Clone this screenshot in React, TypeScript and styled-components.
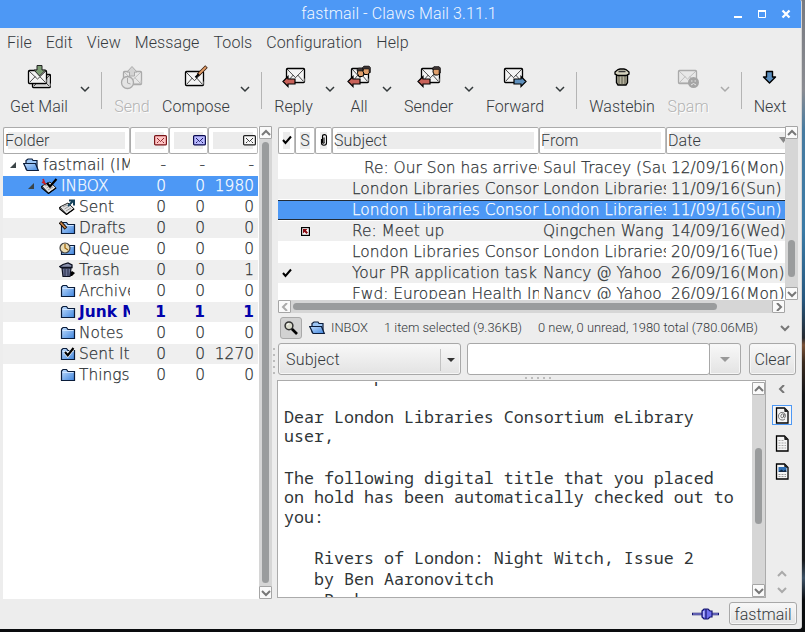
import React from 'react';
import styled, { createGlobalStyle, css } from 'styled-components';

const GlobalStyle = createGlobalStyle`
  * { box-sizing: border-box; }
  body { margin: 0; overflow: hidden; background: #0d0f12; }
`;

const uiFont = 'Roboto, "Liberation Sans", sans-serif';
const listFont = '"DejaVu Sans Light", "DejaVu Sans", sans-serif';
const ink = '#353a3d';
const blue = '#4d98f5';

/* ---------- window frame ---------- */

const Desktop = styled.div`
  width: 805px;
  height: 632px;
  background: linear-gradient(#787a80 0, #8a8c92 90px, #477ba0 130px, #3b7ba6 230px, #27577e 300px, #262a30 338px, #7a5136 345px, #3a2b20 362px, #131518 395px, #17191c 560px, #3d5266 578px, #0a0c0e 600px);
`;
const Window = styled.div`
  width: 802px;
  height: 629px;
  display: flex;
  flex-direction: column;
  background: #ededed;
  border-right: 1px solid #d5d5d5;
  border-radius: 0 2px 3px 0;
  overflow: hidden;
  font: 300 16px ${uiFont};
  color: ${ink};
`;
const TitleBar = styled.header`
  height: 28px;
  flex: none;
  display: grid;
  grid-template-columns: 1fr 69px;
  align-items: center;
  background: ${blue};
  color: #f2f7ff;
  margin-right: -1px;
`;
const Title = styled.h1`
  margin: 0;
  padding-left: 65px;
  font-size: 16px;
  font-weight: 300;
  letter-spacing: 0.1px;
  line-height: 28px;
  text-align: center;
`;
const MenuBar = styled.nav`
  height: 30px;
  flex: none;
  display: flex;
  gap: 14px;
  padding-left: 7px;
  line-height: 29px;
  letter-spacing: 0.08px;
`;
const ToolBar = styled.div`
  height: 67px;
  flex: none;
  display: flex;
`;
const Tool = styled.div<{ $w: number; $off?: boolean }>`
  width: ${p => p.$w}px;
  flex: none;
  display: flex;
  flex-direction: column;
  align-items: center;
  padding-top: 7px;
  white-space: nowrap;
  ${p => p.$off && css`color: #b3b3b3; text-shadow: 1px 1px 0 #fff;`}
  svg { display: block; margin-bottom: 7px; }
  span { line-height: 20px; }
`;
const DropMark = styled.div<{ $w: number }>`
  width: ${p => p.$w}px;
  flex: none;
  display: flex;
  justify-content: center;
  padding-top: 27px;
`;
const Separator = styled.div<{ $w: number }>`
  width: ${p => p.$w}px;
  flex: none;
  display: flex;
  justify-content: center;
  padding-top: 14px;
  &::after { content: ''; width: 1px; height: 37px; background: #b4b4b4; }
`;
const Content = styled.main`
  height: 474px;
  flex: none;
  display: flex;
  padding-top: 1px;
`;
const StatusBar = styled.footer`
  height: 30px;
  flex: none;
  display: flex;
  justify-content: flex-end;
  align-items: flex-start;
  padding: 3px 4px 0 0;
  gap: 10px;
`;
const PlugSlot = styled.div`
  padding-top: 6px;
  svg { display: block; }
`;

/* ---------- scroll bars ---------- */

const Scroll = styled.div<{ $dir: 'row' | 'column' }>`
  flex: none;
  display: flex;
  flex-direction: ${p => p.$dir};
  ${p => (p.$dir === 'row' ? 'height: 13px;' : 'width: 13px;')}
  background: #d6d6d6;
  align-items: center;
`;
const ScrollButton = styled.div`
  width: 13px;
  height: 13px;
  flex: none;
  display: flex;
  align-items: center;
  justify-content: center;
  background: #fafafa;
  border: 1px solid #a5a5a5;
  border-radius: 1px;
`;
const ScrollTrack = styled.div<{ $dir: 'row' | 'column'; $before: number }>`
  flex: 1;
  display: flex;
  ${p => (p.$dir === 'row' ? `padding-left: ${p.$before}px;` : `padding-top: ${p.$before}px;`)}
`;
const Thumb = styled.div<{ $dir: 'row' | 'column'; $len: number }>`
  border-radius: 4px;
  background: #9a9c9d;
  ${p => (p.$dir === 'row' ? `width: ${p.$len}px; height: 7px;` : `height: ${p.$len}px; width: 7px;`)}
`;

/* ---------- column lists ---------- */

const HeaderRow = styled.div`
  height: 27px;
  flex: none;
  display: flex;
  overflow: hidden;
  background: #fff;
`;
const HeaderCell = styled.div<{ $w: number }>`
  width: ${p => p.$w}px;
  flex: none;
  padding: 4px;
  background: #fff;
  border: 1px solid #ababab;
  border-right-color: #bdbdbd;
  border-radius: 2px;
`;
const HeaderLabel = styled.div<{ $align?: 'center' | 'right' | 'between' }>`
  height: 17px;
  display: flex;
  align-items: center;
  background: #ececec;
  line-height: 17px;
  letter-spacing: 0.1px;
  white-space: nowrap;
  justify-content: ${p => (p.$align === 'right' ? 'flex-end' : p.$align === 'center' ? 'center' : p.$align === 'between' ? 'space-between' : 'flex-start')};
  span { margin-left: ${p => (p.$align === 'center' ? 0 : -3)}px; }
  svg { flex: none; margin-right: ${p => (p.$align === 'right' ? -3 : 0)}px; margin-top: -1px; }
`;

const FolderPane = styled.aside`
  width: 269px;
  margin-left: 3px;
  flex: none;
  display: flex;
  height: 473px;
`;
const FolderTable = styled.div`
  width: 256px;
  display: flex;
  flex-direction: column;
  background: #fff;
  padding-right: 1px;
  overflow: hidden;
  margin-top: 1px;
`;
type RowTone = { $tone: 'plain' | 'shade' | 'selected'; $bold?: boolean };
const rowTone = css<RowTone>`
  background: ${p => (p.$tone === 'selected' ? blue : p.$tone === 'shade' ? '#efefef' : '#fff')};
  color: ${p => (p.$bold ? '#0202ac' : p.$tone === 'selected' ? '#fff' : '#2e3336')};
  font: ${p => (p.$bold ? '700 15.4px "DejaVu Sans", sans-serif' : `200 15.4px ${listFont}`)};
  -webkit-text-stroke: ${p => (p.$bold ? 0 : 0.25)}px;
`;
const FolderRow = styled.div<RowTone>`
  height: 20px;
  flex: none;
  margin-bottom: 1px;
  display: grid;
  grid-template-columns: 127px 36px 39px 49px;
  ${rowTone}
  line-height: 20px;
  text-align: right;
`;
const FolderRows = styled.div`
  padding-top: 1px;
`;
const FolderName = styled.div<{ $level: number }>`
  display: flex;
  align-items: center;
  overflow: hidden;
  white-space: nowrap;
  padding-left: ${p => [6, 24, 56][p.$level]}px;
  svg { flex: none; }
`;
const Expander = styled.i`
  width: 14px;
  height: 6px;
  flex: none;
  &::after {
    content: '';
    display: block;
    width: 0;
    margin-left: 1px;
    border-left: 6px solid transparent;
    border-bottom: 6px solid #3b4447;
  }
`;
const IconSlot = styled.div`
  width: 20px;
  height: 16px;
  flex: none;
  svg { display: block; }
`;
const PaneGrip = styled.div`
  width: 5px;
  flex: none;
  display: flex;
  flex-direction: column;
  gap: 4px;
  padding: 222px 0 0 1px;
  i { width: 2px; height: 2px; background: #bcbcbc; }
`;

/* ---------- messages ---------- */

const RightPane = styled.section`
  width: 522px;
  flex: none;
  display: flex;
  flex-direction: column;
`;
const MessageArea = styled.div`
  display: flex;
  height: 174px;
  flex: none;
`;
const MessageTable = styled.div`
  width: 507px;
  margin: 1px 0 0 1px;
  display: flex;
  flex-direction: column;
  background: #fff;
  overflow: hidden;
`;
const MessageRows = styled.div`
  padding-top: 4px;
  height: 145px;
  overflow: hidden;
`;
const MessageRow = styled.div<RowTone>`
  height: 20px;
  margin-bottom: 1px;
  display: grid;
  grid-template-columns: 17px 20px 17px 207px 127px 119px;
  ${rowTone}
  line-height: 20px;
  ${p => p.$tone === 'selected' && css`box-shadow: inset 0 1px #222c38, inset 0 -1px #222c38;`}
`;
const Cell = styled.div<{ $pad?: number }>`
  margin-left: ${p => p.$pad ?? 4}px;
  overflow: hidden;
  white-space: nowrap;
`;
const MarkCell = styled.div`
  display: flex;
  align-items: center;
  justify-content: center;
`;
const HScrollLine = styled.div`
  width: 508px;
  height: 13px;
  flex: none;
  padding-left: 1px;
`;
const SummaryBar = styled.div`
  height: 30px;
  flex: none;
  display: flex;
  align-items: center;
  padding: 0 0 1px 3px;
  font-size: 12.9px;
  white-space: nowrap;
`;
const SearchToggle = styled.div`
  width: 22px;
  height: 22px;
  display: flex;
  align-items: center;
  justify-content: center;
  border: 1px solid #a9a9a9;
  border-radius: 3px;
  background: #d2d2d2;
  margin: 1px 7px 0 0;
`;
const Summary = styled.span<{ $w: number; $pad?: number }>`
  width: ${p => p.$w}px;
  padding-left: ${p => p.$pad ?? 0}px;
  flex: none;
`;
const FilterBar = styled.div`
  height: 32px;
  flex: none;
  display: flex;
  padding-left: 1px;
`;
const raised = css`
  border: 1px solid #a8a8a8;
  border-radius: 3px;
  background: linear-gradient(#f8f8f8, #e3e3e3);
  box-shadow: inset 0 0 0 1px #f6f6f6;
`;
const Combo = styled.div`
  ${raised}
  width: 183px;
  display: flex;
  align-items: center;
  justify-content: space-between;
  padding: 1px 0 0 7px;
  letter-spacing: 0.2px;
`;
const ComboArrow = styled.div`
  width: 20px;
  height: 22px;
  display: flex;
  align-items: center;
  justify-content: center;
  border-left: 1px solid #c2c2c2;
`;
const Triangle = styled.i<{ $c: string; $s: number }>`
  border: ${p => p.$s}px solid transparent;
  border-top-color: ${p => p.$c};
  border-bottom: 0;
`;
const SearchEntry = styled.div`
  width: 243px;
  margin-left: 6px;
  border: 1px solid #a8a8a8;
  border-radius: 3px;
  background: #fff;
`;
const EntryButton = styled.div`
  ${raised}
  width: 32px;
  margin-left: -1px;
  border-radius: 0 3px 3px 0;
  display: flex;
  align-items: center;
  justify-content: center;
`;
const ClearButton = styled.button`
  ${raised}
  width: 47px;
  margin-left: 8px;
  padding: 1px 0 0;
  color: ${ink};
  font: 300 16px ${uiFont};
`;
const RowGrip = styled.div`
  height: 5px;
  flex: none;
  display: flex;
  gap: 4px;
  padding: 2px 0 0 248px;
  i { width: 2px; height: 2px; background: #bcbcbc; }
`;
const Reader = styled.div`
  height: 218px;
  flex: none;
  display: flex;
`;
const TextFrame = styled.div`
  width: 489px;
  display: flex;
  border: 1px solid #ababab;
  background: #fff;
  padding-top: 1px;
`;
const MailText = styled.div`
  flex: 1;
  height: 215px;
  overflow: hidden;
  padding-left: 6px;
  font: 400 16.67px "Noto Sans Mono", "DejaVu Sans Mono", monospace;
  color: #2e3436;
  white-space: pre;
`;
const MailLines = styled.div`
  margin-top: -16px;
`;
const MailLine = styled.div<{ $h: number }>`
  height: ${p => p.$h}px;
  line-height: 20px;
`;
const PartRail = styled.div`
  width: 32px;
  display: flex;
  flex-direction: column;
  align-items: center;
`;
const PartIcon = styled.div<{ $active?: boolean }>`
  width: 20px;
  height: 20px;
  margin-bottom: 8px;
  margin-right: 1px;
  display: flex;
  align-items: center;
  justify-content: center;
  border: 1px solid ${p => (p.$active ? '#4d98f5' : 'transparent')};
  background: ${p => (p.$active ? '#f6f6f6' : 'transparent')};
`;
const RailArrows = styled.div`
  margin: auto 1px 0 0;
  display: flex;
  flex-direction: column;
  gap: 8px;
  padding-bottom: 4px;
`;
const RailTop = styled.div`
  height: 25px;
  svg { display: block; margin-top: 5px; }
`;
const Account = styled.button`
  ${raised}
  width: 68px;
  height: 23px;
  padding: 1px 0 0;
  color: ${ink};
  font: 300 16px ${uiFont};
`;

/* ---------- icons ---------- */

const arrows = {
  down: 'M1 2l4 4 4-4',
  up: 'M1 6l4-4 4 4',
  left: 'M7 0L3 4l4 4',
  right: 'M3 0l4 4-4 4',
};
const Chevron = ({ dir, color = '#33393b', weight = 1.5 }: { dir: keyof typeof arrows; color?: string; weight?: number }) => (
  <svg width="10" height="8" viewBox="0 0 10 8" fill="none" stroke={color} strokeWidth={weight}><path d={arrows[dir]} /></svg>
);

const Envelope = ({ x, y, w = 18, h = 14, line = '#000', fill = '#f4f4f4' }: { x: number; y: number; w?: number; h?: number; line?: string; fill?: string }) => (
  <g>
    <rect x={x + 0.5} y={y + 0.5} width={w} height={h} rx="1" fill={fill} stroke={line} strokeWidth="1.3" />
    <path d={`M${x + 1} ${y + h - 0.5}l${w - 1} 0v-3`} stroke="#c4c4c4" fill="none" />
    <path d={`M${x + 1} ${y + 1}l${w / 2 - 0.5} ${h * 0.62} ${w / 2 - 0.5} ${-h * 0.62}M${x + 1.5} ${y + h - 0.5}l${w * 0.32} ${-h * 0.46}M${x + w - 0.5} ${y + h - 0.5}l${-w * 0.32} ${-h * 0.46}`} fill="none" stroke={line} strokeWidth="0.7" />
  </g>
);
const Head = ({ x, y, skin = '#e0a06c' }: { x: number; y: number; skin?: string }) => (
  <g>
    <path d={`M${x + 1} ${y + 1}h6v6l-2 1.500h-3l-1.500-3z`} fill={skin} stroke="#000" />
    <path d={`M${x} ${y + 3}v-1.500l1.500-1.500h5l1.500 1.500v5h-1.500v-3.500z`} fill="#3c3434" stroke="#000" strokeWidth="0.5" />
  </g>
);
const LeftArrow = () => <path d="M1 16.500l5-5v2.500h7v5H6v2.500z" fill="#c9625a" stroke="#000" strokeWidth="1.2" />;

type ToolIconName = 'get' | 'send' | 'compose' | 'reply' | 'all' | 'sender' | 'forward' | 'trash' | 'spam' | 'next';
const toolDrawings: Record<ToolIconName, React.ReactNode> = {
  get: <>
    <Envelope x={5} y={9} w={18} h={13} fill="#d5d5d5" />
    <Envelope x={1} y={5} w={18} h={13} />
    <path d="M10 .5h5v4.500h3.500L12.500 11 7 5h3z" fill="#7c9c74" stroke="#222" />
  </>,
  send: <>
    <Envelope x={3} y={6} w={18} h={13} line="#aaa" fill="#e8e8e8" />
    <path d="M12 1.500l5 5.500h-2.500v4h-5V7H7z" fill="#d3d3d3" stroke="#aaa" />
    <circle cx="7.500" cy="17.500" r="6" fill="#e4e4e4" stroke="#aaa" strokeWidth="1.300" />
    <path d="M7.500 13v5l3 1" fill="none" stroke="#aaa" />
  </>,
  compose: <>
    <Envelope x={1} y={6} w={18} h={14} />
    <path d="M22.500 1.500L14 10" stroke="#3d2010" strokeWidth="3.600" />
    <path d="M22 2L14.500 9.500" stroke="#e29d68" strokeWidth="1.800" />
    <path d="M15 9l-3.500 3.500" stroke="#000" strokeWidth="2.200" />
  </>,
  reply: <><Envelope x={4} y={3} w={18} h={14} /><LeftArrow /></>,
  all: <><Envelope x={4} y={3} w={17} h={14} /><LeftArrow /><Head x={10} y={3} /><Head x={15.500} y={1} /></>,
  sender: <><Envelope x={4} y={3} w={18} h={14} /><LeftArrow /><Head x={15.500} y={1.500} /></>,
  forward: <>
    <Envelope x={1} y={3} w={18} h={14} />
    <path d="M23 16.500l-5-5v2.500h-7v5h7v2.500z" fill="#5f90bd" stroke="#000" strokeWidth="1.200" />
  </>,
  trash: <>
    <path d="M6.500 9.500h11v8l-1.500 2.500h-8l-1.500-2.500z" fill="#b6b39f" stroke="#000" strokeWidth="1.400" />
    <path d="M9 11v8M12 11.500v8M15 11v8" stroke="#5a5848" />
    <path d="M5 7l3-2.500 2-.5h4l2 .5 3 2.500v2l-3 1.500H8L5 9z" fill="#d4d1bd" stroke="#000" strokeWidth="1.300" />
    <path d="M8.500 6.500h7" stroke="#333" strokeWidth="1.500" />
  </>,
  spam: <>
    <Envelope x={2} y={5} w={18} h={13} line="#aaa" fill="#e8e8e8" />
    <circle cx="17.500" cy="17.500" r="5.500" fill="#a5a5a5" />
    <path d="M15 16h1.500M18.500 16H20M15 20l2.500-1.500L20 20" fill="none" stroke="#e6e6e6" />
  </>,
  next: <path d="M8.500 6.500h6v5.500h3L11.500 18l-6-6h3z" fill="#5b8fc0" stroke="#000" strokeWidth="1.400" strokeLinejoin="round" />,
};
const ToolIcon = ({ name }: { name: ToolIconName }) => (
  <svg width="24" height="25" viewBox="0 0 24 25">{toolDrawings[name]}</svg>
);

const MiniMail = ({ line, fill }: { line: string; fill: string }) => (
  <svg width="13" height="11" viewBox="0 0 13 11" fill="none">
    <rect x=".6" y=".6" width="11.800" height="9.300" rx="1" fill={fill} stroke={line} strokeWidth="1.200" />
    <path d="M3 3l3.500 3.500L10 3M3 8l1.500-1.500M10 8L8.500 6.500" stroke={line} strokeWidth=".9" />
  </svg>
);

const TickMark = () => (
  <svg width="10" height="10" viewBox="0 0 10 10" fill="none" stroke="#000" strokeWidth="2"><path d="M1 5l2.500 3L9 1.500" /></svg>
);
const ClipMark = () => (
  <svg width="8" height="12" viewBox="0 0 8 12" fill="none" stroke="#000" strokeWidth="1.100"><path d="M4 3.500v4.500M1.500 5V9c0 3 5 3 5 0V2.500C6.500 0 2.500 0 2.500 2.500V8c0 1.500 1.800 1.500 1.800 0" /></svg>
);
const SortMark = () => (
  <svg width="8" height="7" viewBox="0 0 8 7"><path d="M0 0h8L4.500 6z" fill="#888" /></svg>
);

type FolderIconName = 'open' | 'inbox' | 'sent' | 'drafts' | 'queue' | 'trash' | 'folder' | 'check';
const folderShape = <>
  <path d="M2.500 13.500V4L4 2.500h3.500L9 4.500h6.500v9z" fill="url(#folderFill)" stroke="#0a1c3a" strokeWidth="1.200" />
  <path d="M3.500 5.500h11" stroke="#cfe4ff" />
</>;
const tray = <>
  <path d="M.8 8L9 4l6.200 6-7.700 5.200z" fill="#e2e2e2" stroke="#222" />
  <path d="M.8 8v2L7.500 15.500 15 10" fill="none" stroke="#000" strokeWidth="1.200" />
  <path d="M4 8l4-2M5.500 10l5-3M7 12l5-3" stroke="#888" strokeWidth=".8" />
</>;
const folderDrawings: Record<FolderIconName, React.ReactNode> = {
  folder: folderShape,
  open: <>
    <path d="M3 12V3.500L5 2h4l1 1.500h4v9z" fill="#9dc6f5" stroke="#0a1c3a" strokeWidth="1.200" />
    <path d="M.7 6.500h11.800l2.800 7H4z" fill="url(#folderFill)" stroke="#0a1c3a" strokeWidth="1.200" />
  </>,
  inbox: <>{tray}<path d="M2 1l2 5M1 4l4 2" stroke="#c5202a" strokeWidth="1.800" /><path d="M6 5l3 3.500L15.500 1" fill="none" stroke="#000" strokeWidth="2.200" /></>,
  sent: <>{tray}<path d="M9 7l5-5M10 1.500h5v5" fill="none" stroke="#14425c" strokeWidth="2" /></>,
  drafts: <>{folderShape}<path d="M1 2l6 6.500" stroke="#1a1008" strokeWidth="3.500" /><path d="M1.500 2.500l5 5.500" stroke="#d08748" strokeWidth="1.500" /></>,
  queue: <>{folderShape}<circle cx="6" cy="7" r="5" fill="#eadcb4" stroke="#444" strokeWidth="1.200" /><path d="M6 3v4l3 2" fill="none" stroke="#a06a10" strokeWidth="1.300" /></>,
  trash: <>
    <path d="M13 9l3 2-3 3H8z" fill="#000" />
    <path d="M3 6h9l-1 8.500H4z" fill="#6c7494" stroke="#0c1020" strokeWidth="1.200" />
    <path d="M6 7v7M9 7v7" stroke="#252b48" />
    <path d="M.8 4.500L4 2.500l5-1.500 4 2v2.500H2z" fill="#8990ac" stroke="#0c1020" strokeWidth="1.300" />
  </>,
  check: <>{folderShape}<path d="M6 6l2.800 3.200L14.500 2" fill="none" stroke="#fff" strokeWidth="3.500" /><path d="M6 6l2.800 3.200L14.500 2" fill="none" stroke="#000" strokeWidth="2.200" /></>,
};
const FolderIcon = ({ name }: { name: FolderIconName }) => (
  <svg width="17" height="16" viewBox="0 0 17 16">
    <defs><linearGradient id="folderFill" x1="0" y1="0" x2="1" y2="1"><stop stopColor="#c3dfff" /><stop offset="1" stopColor="#3f84dc" /></linearGradient></defs>
    {folderDrawings[name]}
  </svg>
);

const Magnifier = () => (
  <svg width="16" height="16" viewBox="0 0 16 16"><path d="M8.500 8.500l5.500 5.500" stroke="#000" strokeWidth="2.600" /><circle cx="6" cy="5.800" r="3.900" fill="#d9dacb" stroke="#333" strokeWidth="1.500" /><path d="M4 5l2-1.500" stroke="#fff" /></svg>
);
const Page = ({ kind }: { kind: 'mail' | 'text' | 'image' }) => (
  <svg width="14" height="17" viewBox="0 0 14 17" fill="none">
    <path d="M1.500 1h8l3.500 3.500v11.500h-11.500z" fill="#f5f5f5" stroke="#000" strokeWidth="1.300" />
    <path d="M9 1l4 4H9.500z" fill="#222" />
    {kind === 'text' && <path d="M3.500 5.500h5M3.500 8h7.500M3.500 10.500h7.500M3.500 13h7.500" stroke="#aaa" strokeDasharray="2 1" />}
    {kind === 'mail' && <path d="M8.700 7c-3-1.200-3.800 4-1.500 3.800C9 10.500 9 7 9 7s-.8 4 .6 3.800C11 10.500 11 5.400 7.200 5.400c-5 0-5 7.600 0 7.600 1.500 0 2.300-.5 2.800-.8" stroke="#555" strokeWidth=".8" />}
    {kind === 'image' && <><rect x="3.500" y="4" width="8" height="5" fill="#2f6fb4" /><path d="M3.500 9l3-2.500 2 1.500 2-1.500 1 2.500z" fill="#152a44" /><path d="M3.500 11.500h7.500M3.500 13.500h7.500" stroke="#999" strokeDasharray="2 1" /></>}
  </svg>
);
const ReplyMark = () => (
  <svg width="9" height="9" viewBox="0 0 9 9"><rect x=".6" y=".6" width="7.800" height="7.800" fill="#fff" stroke="#000" strokeWidth="1.200" /><path d="M2 2h4.500L5 3.500l2 2-1.500 1.500-2-2L2 6.500z" fill="#8b0a12" /></svg>
);
const Plug = () => (
  <svg width="27" height="12" viewBox="0 0 27 12"><path d="M0 6h10M17 6h10" stroke="#16166e" strokeWidth="2.600" /><path d="M1 6h9M17 6h9" stroke="#a8a8f4" /><path d="M10 3l2-2h4l2 2h2v6h-2l-2 2h-4l-2-2z" fill="#7070f0" stroke="#16166e" strokeWidth="1.200" /><path d="M14 1v10" stroke="#16166e" strokeWidth="1.200" /><path d="M11.800 3v6" stroke="#dcdcff" /></svg>
);
const WindowButtons = () => (
  <svg width="69" height="28" viewBox="0 0 69 28" fill="none" stroke="#fff"><path d="M1 17h8" strokeWidth="2" /><path d="M25 11h8" strokeWidth="2" /><path d="M25.500 10.500h7v7h-7z" /><path d="M49.500 10.500l7 7M56.500 10.500l-7 7" strokeWidth="2.300" /></svg>
);

/* ---------- data ---------- */

const folders: { name: string; icon: FolderIconName; level: number; counts: string[] }[] = [
  { name: 'fastmail (IMAP4)', icon: 'open', level: 0, counts: ['-', '-', '-'] },
  { name: 'INBOX', icon: 'inbox', level: 1, counts: ['0', '0', '1980'] },
  { name: 'Sent', icon: 'sent', level: 2, counts: ['0', '0', '0'] },
  { name: 'Drafts', icon: 'drafts', level: 2, counts: ['0', '0', '0'] },
  { name: 'Queue', icon: 'queue', level: 2, counts: ['0', '0', '0'] },
  { name: 'Trash', icon: 'trash', level: 2, counts: ['0', '0', '1'] },
  { name: 'Archive', icon: 'folder', level: 2, counts: ['0', '0', '0'] },
  { name: 'Junk Mail', icon: 'folder', level: 2, counts: ['1', '1', '1'] },
  { name: 'Notes', icon: 'folder', level: 2, counts: ['0', '0', '0'] },
  { name: 'Sent Items', icon: 'check', level: 2, counts: ['0', '0', '1270'] },
  { name: 'Things', icon: 'folder', level: 2, counts: ['0', '0', '0'] },
];
const messages: { subject: string; from: string; date: string; pad?: number; mark?: boolean; replied?: boolean }[] = [
  { subject: 'Re: Our Son has arrived', from: 'Saul Tracey (Saul)', date: '12/09/16(Mon)', pad: 32 },
  { subject: 'London Libraries Consortium', from: 'London Libraries', date: '11/09/16(Sun)' },
  { subject: 'London Libraries Consortium', from: 'London Libraries', date: '11/09/16(Sun)' },
  { subject: 'Re: Meet up', from: 'Qingchen Wang', date: '14/09/16(Wed)', replied: true },
  { subject: 'London Libraries Consortium', from: 'London Libraries', date: '20/09/16(Tue)' },
  { subject: 'Your PR application task', from: 'Nancy @ Yahoo', date: '26/09/16(Mon)', mark: true },
  { subject: 'Fwd: European Health Insurance', from: 'Nancy @ Yahoo', date: '26/09/16(Mon)' },
];
const mail: [string, number][] = [
  ['         p', 20],
  ['', 21],
  ['Dear London Libraries Consortium eLibrary', 19],
  ['user,', 21],
  ['', 21],
  ['The following digital title that you placed', 19],
  ['on hold has been automatically checked out to', 20],
  ['you:', 21],
  ['', 20],
  ['   Rivers of London: Night Witch, Issue 2', 21],
  ['   by Ben Aaronovitch', 21],
  ['   eBook', 21],
];
const menus = ['File', 'Edit', 'View', 'Message', 'Tools', 'Configuration', 'Help'];
const tone = (i: number, selected: number): RowTone['$tone'] => (i === selected ? 'selected' : i % 2 ? 'shade' : 'plain');
const dots = [0, 1, 2, 3, 4];

const VScroll = ({ before, len }: { before: number; len: number }) => (
  <Scroll $dir="column">
    <ScrollButton><Chevron dir="up" color="#777" weight={2} /></ScrollButton>
    <ScrollTrack $dir="column" $before={before}><Thumb $dir="column" $len={len} /></ScrollTrack>
    <ScrollButton><Chevron dir="down" color="#777" weight={2} /></ScrollButton>
  </Scroll>
);

export default function App() {
  return (
    <Desktop>
      <GlobalStyle />
      <Window>
        <TitleBar><Title>fastmail - Claws Mail 3.11.1</Title><WindowButtons /></TitleBar>
        <MenuBar>{menus.map(m => <span key={m}>{m}</span>)}</MenuBar>
        <ToolBar>
          <Tool $w={78}><ToolIcon name="get" /><span>Get Mail</span></Tool>
          <DropMark $w={14}><Chevron dir="down" /></DropMark>
          <Separator $w={19} />
          <Tool $w={42} $off><ToolIcon name="send" /><span>Send</span></Tool>
          <Tool $w={86}><ToolIcon name="compose" /><span>Compose</span></Tool>
          <DropMark $w={12}><Chevron dir="down" /></DropMark>
          <Separator $w={21} />
          <Tool $w={43}><ToolIcon name="reply" /><span>Reply</span></Tool>
          <DropMark $w={29}><Chevron dir="down" /></DropMark>
          <Tool $w={30}><ToolIcon name="all" /><span>All</span></Tool>
          <DropMark $w={26}><Chevron dir="down" /></DropMark>
          <Tool $w={57}><ToolIcon name="sender" /><span>Sender</span></Tool>
          <DropMark $w={23}><Chevron dir="down" /></DropMark>
          <Tool $w={70}><ToolIcon name="forward" /><span>Forward</span></Tool>
          <DropMark $w={20}><Chevron dir="down" /></DropMark>
          <Separator $w={12} />
          <Tool $w={80}><ToolIcon name="trash" /><span>Wastebin</span></Tool>
          <Tool $w={52} $off><ToolIcon name="spam" /><span>Spam</span></Tool>
          <DropMark $w={22}><Chevron dir="down" color="#aaa" /></DropMark>
          <Separator $w={10} />
          <Tool $w={48}><ToolIcon name="next" /><span>Next</span></Tool>
        </ToolBar>

        <Content>
          <FolderPane>
            <FolderTable>
              <HeaderRow>
                <HeaderCell $w={127}><HeaderLabel><span>Folder</span></HeaderLabel></HeaderCell>
                <HeaderCell $w={39}><HeaderLabel $align="right"><MiniMail line="#7a1418" fill="#ffc4c4" /></HeaderLabel></HeaderCell>
                <HeaderCell $w={39}><HeaderLabel $align="right"><MiniMail line="#0b0b50" fill="#b9b9ff" /></HeaderLabel></HeaderCell>
                <HeaderCell $w={50}><HeaderLabel $align="right"><MiniMail line="#222" fill="#f8f8f8" /></HeaderLabel></HeaderCell>
              </HeaderRow>
              <FolderRows>
                {folders.map((f, i) => (
                  <FolderRow key={f.name} $tone={tone(i, 1)} $bold={f.name === 'Junk Mail'}>
                    <FolderName $level={f.level}>
                      {f.level < 2 && <Expander />}
                      <IconSlot><FolderIcon name={f.icon} /></IconSlot>
                      <span>{f.name}</span>
                    </FolderName>
                    {f.counts.map((c, k) => <span key={k}>{c}</span>)}
                  </FolderRow>
                ))}
              </FolderRows>
            </FolderTable>
            <VScroll before={3} len={441} />
          </FolderPane>
          <PaneGrip>{dots.map(d => <i key={d} />)}</PaneGrip>

          <RightPane>
            <MessageArea>
              <MessageTable>
                <HeaderRow>
                  <HeaderCell $w={17}><HeaderLabel $align="center"><TickMark /></HeaderLabel></HeaderCell>
                  <HeaderCell $w={20}><HeaderLabel $align="center"><span>S</span></HeaderLabel></HeaderCell>
                  <HeaderCell $w={17}><HeaderLabel $align="center"><ClipMark /></HeaderLabel></HeaderCell>
                  <HeaderCell $w={207}><HeaderLabel><span>Subject</span></HeaderLabel></HeaderCell>
                  <HeaderCell $w={127}><HeaderLabel><span>From</span></HeaderLabel></HeaderCell>
                  <HeaderCell $w={126}><HeaderLabel $align="between"><span>Date</span><SortMark /></HeaderLabel></HeaderCell>
                </HeaderRow>
                <MessageRows>
                  {messages.map((m, i) => (
                    <MessageRow key={i} $tone={tone(i, 2)}>
                      <MarkCell>{m.mark && <TickMark />}</MarkCell>
                      <MarkCell>{m.replied && <ReplyMark />}</MarkCell>
                      <MarkCell />
                      <Cell $pad={m.pad ?? 20}>{m.subject}</Cell>
                      <Cell>{m.from}</Cell>
                      <Cell $pad={5}>{m.date}</Cell>
                    </MessageRow>
                  ))}
                </MessageRows>
              </MessageTable>
              <VScroll before={101} len={37} />
            </MessageArea>
            <HScrollLine>
              <Scroll $dir="row">
                <ScrollButton><Chevron dir="left" color="#aaa" weight={2} /></ScrollButton>
                <ScrollTrack $dir="row" $before={2}><Thumb $dir="row" $len={424} /></ScrollTrack>
                <ScrollButton><Chevron dir="right" color="#777" weight={2} /></ScrollButton>
              </Scroll>
            </HScrollLine>
            <SummaryBar>
              <SearchToggle><Magnifier /></SearchToggle>
              <FolderIcon name="open" />
              <Summary $w={58} $pad={5}>INBOX</Summary>
              <Summary $w={154}>1 item selected (9.36KB)</Summary>
              <Summary $w={242}>0 new, 0 unread, 1980 total (780.06MB)</Summary>
              <Chevron dir="down" color="#777" weight={2} />
            </SummaryBar>
            <FilterBar>
              <Combo>Subject<ComboArrow><Triangle $c="#333" $s={4} /></ComboArrow></Combo>
              <SearchEntry />
              <EntryButton><Triangle $c="#999" $s={5} /></EntryButton>
              <ClearButton>Clear</ClearButton>
            </FilterBar>
            <RowGrip>{dots.map(d => <i key={d} />)}</RowGrip>
            <Reader>
              <TextFrame>
                <MailText>
                  <MailLines>{mail.map(([t, h], i) => <MailLine key={i} $h={h}>{t}</MailLine>)}</MailLines>
                </MailText>
                <VScroll before={53} len={76} />
              </TextFrame>
              <PartRail>
                <RailTop><Chevron dir="left" color="#777" weight={2} /></RailTop>
                <PartIcon $active><Page kind="mail" /></PartIcon>
                <PartIcon><Page kind="text" /></PartIcon>
                <PartIcon><Page kind="image" /></PartIcon>
                <RailArrows><Chevron dir="up" color="#aaa" weight={2} /><Chevron dir="down" color="#aaa" weight={2} /></RailArrows>
              </PartRail>
            </Reader>
          </RightPane>
        </Content>

        <StatusBar><PlugSlot><Plug /></PlugSlot><Account>fastmail</Account></StatusBar>
      </Window>
    </Desktop>
  );
}
